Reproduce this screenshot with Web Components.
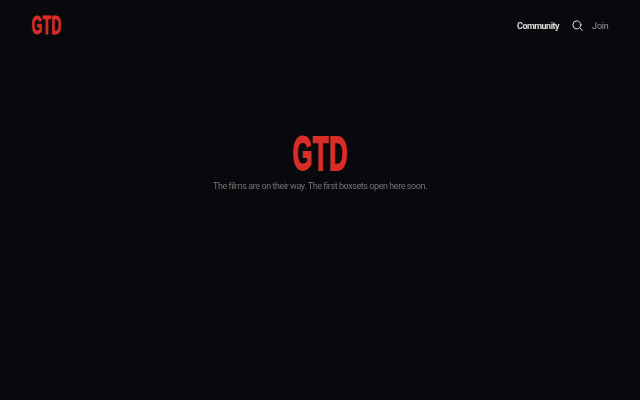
<!DOCTYPE html>
<html>
<head>
<meta charset="utf-8">
<title>GTD</title>
<style>
  html, body { margin: 0; height: 100%; background: #08090c; }
  body { font-family: Roboto, "Liberation Sans", sans-serif; overflow: hidden; }
</style>
</head>
<body>
<gtd-page>
  <gtd-header slot="header"></gtd-header>
  <gtd-hero>The films are on their way. The first boxsets open here soon.</gtd-hero>
</gtd-page>

<script>
const logoCss = `
  .logo {
    display: flex;
    justify-content: center;
    font-family: "Liberation Sans", Arial, sans-serif;
    font-weight: 700;
    color: #d92d27;
    white-space: nowrap;
    transform-origin: center;
  }
`;

class GtdPage extends HTMLElement {
    connectedCallback() {
        const shadow = this.attachShadow({ mode: "open" });
        shadow.innerHTML = `
        <style>
            :host { display: flex; flex-direction: column; width: 640px; height: 400px; background: #08090c; }
            main { flex: 1; display: flex; flex-direction: column; }
        </style>
        <slot name="header"></slot>
        <main><slot></slot></main>
        `;
    }
}

class GtdHeader extends HTMLElement {
    connectedCallback() {
        const shadow = this.attachShadow({ mode: "open" });
        shadow.innerHTML = `
        <style>
            :host { display: flex; align-items: center; justify-content: space-between; height: 50px; padding: 0 31px 0 32px; }
            ${logoCss}
            .logo { width: 29px; font-size: 25px; line-height: 26px; letter-spacing: 0.5px; transform: scaleX(0.55); -webkit-text-stroke: 0.9px #d92d27; }
            nav { display: flex; align-items: center; will-change: transform; }
            .community { font-size: 9px; font-weight: 700; letter-spacing: -0.5px; color: #dedede; }
            svg { display: block; margin-left: 13px; }
            .join { margin-left: 9px; font-size: 9px; letter-spacing: -0.2px; color: #999; }
        </style>
        <div class="logo">GTD</div>
        <nav>
            <span class="community">Community</span>
            <svg width="11" height="11" viewBox="0 0 11 11" fill="none" stroke="#dcdcdc" stroke-width="1" stroke-linecap="round">
                <circle cx="4.9" cy="4.9" r="4"/>
                <path d="M7.8 7.8 10.4 10.4"/>
            </svg>
            <span class="join">Join</span>
        </nav>
        `;
    }
}

class GtdHero extends HTMLElement {
    connectedCallback() {
        const shadow = this.attachShadow({ mode: "open" });
        shadow.innerHTML = `
        <style>
            :host { display: flex; flex-direction: column; align-items: center; padding-top: 79px; }
            ${logoCss}
            .logo { font-size: 48px; line-height: 50px; letter-spacing: 1px; transform: scaleX(0.53); -webkit-text-stroke: 1.8px #d92d27; }
            p { margin: 0; font-size: 9px; line-height: 14px; letter-spacing: -0.43px; color: #747474; white-space: nowrap; will-change: transform; }
        </style>
        <div class="logo">GTD</div>
        <p><slot></slot></p>
        `;
    }
}

customElements.define("gtd-page", GtdPage);
customElements.define("gtd-header", GtdHeader);
customElements.define("gtd-hero", GtdHero);
</script>
</body>
</html>
